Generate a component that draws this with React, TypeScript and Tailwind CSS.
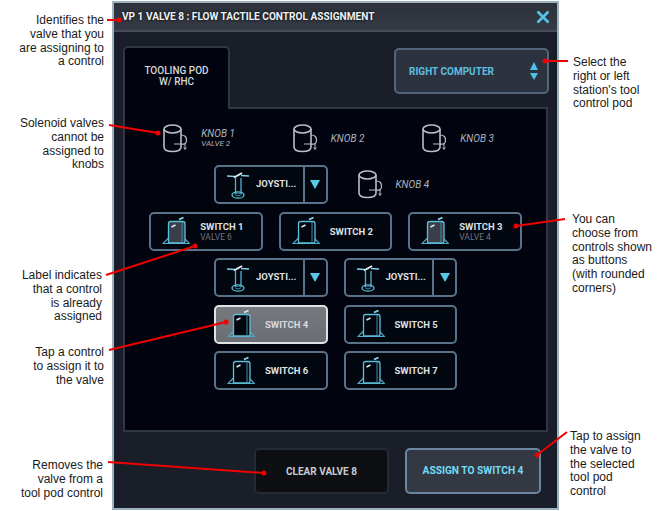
const MugIcon = () => (
  <svg width="26" height="29" viewBox="0 0 26 29" fill="none" stroke="#b9bec7" strokeWidth="1.6" className="shrink-0">
    <ellipse cx="10.5" cy="5" rx="8.5" ry="4" />
    <path d="M2 5 V23 Q2 27.5 10.5 27.5 Q19 27.5 19 23 V5" />
    <path d="M19 11 Q25 11 24.5 17 Q24 21 19 20 H12" strokeWidth="1.2" />
    <path d="M23 19 V25 M21.7 23.5 L23 25.5 L24.3 23.5" strokeWidth="1" />
  </svg>
);

const SwitchIcon = ({ dark, fill }: { dark?: boolean; fill?: string }) => (
  <svg width="28" height="30" viewBox="0 0 28 30" fill="none" className="shrink-0">
    <path d="M6.5 22 L1 27.5 H27.5 L23 23" stroke="#4fa9c6" strokeWidth="1.2" />
    <path d="M6.5 7.5 Q6.5 5.5 9 5.5 H21 Q23 5.5 23 8 V25.5 Q23 27 21 27 H6.5 Z" fill={fill ?? 'none'} stroke="#5cc0dc" strokeWidth="1.3" />
    <path d="M20 6 V27" stroke="#3d8ba6" strokeWidth="1" />
    <path d="M17 3.5 L21.5 1.5" stroke={dark ? '#d6e6ee' : '#8fdcf0'} strokeWidth="1.8" />
    <path d="M9.5 11 L13.5 9" stroke="#cdeaf4" strokeWidth="1.6" />
  </svg>
);

const JoystickIcon = () => (
  <svg width="24" height="29" viewBox="0 0 24 29" fill="none" className="shrink-0">
    <path d="M1 6 L9 6.5 M15 5.5 L23 6" stroke="#7fd4ec" strokeWidth="1.5" />
    <path d="M8 7.5 L16 3" stroke="#e4f2f7" strokeWidth="2" />
    <path d="M9.5 8 V24 M15 8 V24" stroke="#4fb2d0" strokeWidth="1.3" />
    <ellipse cx="12" cy="25" rx="6" ry="3.2" stroke="#5cc0dc" strokeWidth="1.3" />
    <ellipse cx="12" cy="24.5" rx="2.8" ry="1.4" stroke="#3d8ba6" strokeWidth="1" />
  </svg>
);

const Knob = ({ name, valve }: { name: string; valve?: string }) => (
  <div className="flex h-[39px] w-[113.5px] items-center pl-[13px]">
    <MugIcon />
    <div className="ml-[13px] flex flex-col italic text-[#aeb3bf]">
      <span className="text-[10px] leading-[11px]">{name}</span>
      {valve && <span className="text-[8px] leading-[9px]">{valve}</span>}
    </div>
  </div>
);

const SwitchButton = ({ name, valve, selected }: { name: string; valve?: string; selected?: boolean }) => (
  <div
    className={
      selected
        ? 'flex h-[39px] w-[113.5px] items-center rounded-[5px] border-2 border-[#dfe3e6] bg-gradient-to-b from-[#77797f] to-[#6a6d74] pl-[11px]'
        : 'flex h-[39px] w-[113.5px] items-center rounded-[5px] border-2 border-[#587389] bg-[#02060f] pl-[11px]'
    }
  >
    <SwitchIcon dark={selected} fill={selected ? '#03060d' : valve ? '#3a3e48' : undefined} />
    <div className="ml-[10px] flex flex-col">
      <span className={selected ? 'text-[9.5px] leading-[11px] font-bold text-[#d8dadd]' : 'text-[9.5px] leading-[11px] font-bold text-[#dfe1e4]'}>{name}</span>
      {valve && <span className="text-[8.5px] leading-[10px] text-[#6f7683]">{valve}</span>}
    </div>
  </div>
);

const JoystickButton = () => (
  <div className="flex h-[39px] w-[113.5px] items-stretch rounded-[5px] border-2 border-[#587389] bg-[#02060f]">
    <div className="flex flex-1 items-center border-r-2 border-[#587389] pl-[10px]">
      <JoystickIcon />
      <span className="ml-[6px] text-[9.5px] font-bold text-[#dfe1e4]">JOYSTI...</span>
    </div>
    <div className="flex w-[21px] items-center justify-center">
      <svg width="10" height="9" viewBox="0 0 10 9">
        <path d="M0 0 H10 L5 9 Z" fill="#58c9ea" />
      </svg>
    </div>
  </div>
);

const Row = ({ children }: { children: React.ReactNode }) => (
  <div className="flex justify-center gap-4">{children}</div>
);

// callout text sits beside the panel, at the spots the arrows point from
const Note = ({ className, lines }: { className: string; lines: string[] }) => (
  <div className={'absolute text-[12px] leading-[13.8px] text-[#1a1a1a] ' + className}>
    {lines.map((line) => (
      <div key={line} className="whitespace-nowrap">{line}</div>
    ))}
  </div>
);

const arrows = [
  [107, 20, 119, 20],
  [109, 125, 158, 133],
  [106, 275, 195, 246],
  [109, 350, 226, 322],
  [108, 462, 264, 473],
  [568, 61, 545, 61],
  [565, 219, 516, 226],
  [567, 432, 537, 455],
];

export default function App() {
  return (
    <div className="relative h-[511px] w-[672px] overflow-hidden bg-white pl-[112px] pt-px font-['Roboto',sans-serif]">
      <div className="flex h-[509px] w-[447px] flex-col border-2 border-[#9db1c0] bg-[#191e28]">
        <div className="flex h-[29px] shrink-0 items-center justify-between border-b-2 border-[#454c58] bg-gradient-to-b from-[#2c313a] to-[#353a44] pl-[8px] pr-[7px]">
          <span className="text-[10.1px] font-bold text-[#eef0f2] [text-shadow:0_0_3px_#000]">VP 1 VALVE 8 : FLOW TACTILE CONTROL ASSIGNMENT</span>
          <svg width="14" height="14" viewBox="0 0 14 14" fill="none" stroke="#56c3e6" strokeWidth="2.6">
            <path d="M1.5 1.5 L12.5 12.5 M12.5 1.5 L1.5 12.5" />
          </svg>
        </div>

        <div className="flex flex-1 flex-col pl-[9px] pr-[9px] pt-[14px]">
          <div className="flex h-[61px] items-start justify-between">
            <div className="relative z-10 flex h-[63px] w-[107px] flex-col items-center rounded-t-[5px] border-2 border-b-0 border-[#2f3744] bg-[#01040f] pt-[17px] text-[10px] leading-[11px] font-medium text-[#d5d8dc]">
              <span>TOOLING POD</span>
              <span>W/ RHC</span>
            </div>
            <div className="-mr-px mt-[2px] flex h-[46px] w-[155px] items-center justify-between rounded-[5px] border-2 border-[#52657a] bg-[#2d333e] pl-[13px] pr-[9px]">
              <span className="text-[10px] font-bold text-[#5cbfe0]">RIGHT COMPUTER</span>
              <svg width="8" height="18" viewBox="0 0 8 18" fill="#4fc0e8">
                <path d="M4 0 L8 8 H0 Z M0 11 H8 L4 18 Z" />
              </svg>
            </div>
          </div>

          <div className="flex h-[325px] flex-col gap-[7.5px] border-2 border-[#2f3744] bg-[#01040f] pt-[9.5px]">
            <Row>
              <Knob name="KNOB 1" valve="VALVE 2" />
              <Knob name="KNOB 2" />
              <Knob name="KNOB 3" />
            </Row>
            <Row>
              <JoystickButton />
              <Knob name="KNOB 4" />
            </Row>
            <Row>
              <SwitchButton name="SWITCH 1" valve="VALVE 6" />
              <SwitchButton name="SWITCH 2" />
              <SwitchButton name="SWITCH 3" valve="VALVE 4" />
            </Row>
            <Row>
              <JoystickButton />
              <JoystickButton />
            </Row>
            <Row>
              <SwitchButton name="SWITCH 4" selected />
              <SwitchButton name="SWITCH 5" />
            </Row>
            <Row>
              <SwitchButton name="SWITCH 6" />
              <SwitchButton name="SWITCH 7" />
            </Row>
          </div>

          <div className="mt-[16px] flex justify-end gap-4 pr-[7px]">
            <div className="flex h-[46px] w-[135px] items-center justify-center rounded-[5px] border-2 border-[#252b35] bg-[#0e0f12] text-[10px] font-bold text-[#c9ccd2]">
              CLEAR VALVE 8
            </div>
            <div className="flex h-[46px] w-[136px] items-center justify-center rounded-[5px] border-2 border-[#6a87a0] bg-[#333842] text-[10.2px] font-bold text-[#74dcf2]">
              ASSIGN TO SWITCH 4
            </div>
          </div>
        </div>
      </div>

      <div className="font-['Liberation_Sans',sans-serif]">
        <Note className="right-[568px] top-[14px] text-right" lines={['Identifies the', 'valve that you', 'are assigning to', 'a control']} />
        <Note className="right-[568px] top-[117px] text-right" lines={['Solenoid valves', 'cannot be', 'assigned to', 'knobs']} />
        <Note className="right-[570px] top-[269px] text-right" lines={['Label indicates', 'that a control', 'is already', 'assigned']} />
        <Note className="right-[568px] top-[346px] text-right" lines={['Tap a control', 'to assign it to', 'the valve']} />
        <Note className="right-[569px] top-[459px] text-right" lines={['Removes the', 'valve from a', 'tool pod control']} />
        <Note className="left-[573px] top-[56px]" lines={['Select the', 'right or left', "station's tool", 'control pod']} />
        <Note className="left-[572px] top-[213px]" lines={['You can', 'choose from', 'controls shown', 'as buttons', '(with rounded', 'corners)']} />
        <Note className="left-[570px] top-[430px]" lines={['Tap to assign', 'the valve to', 'the selected', 'tool pod', 'control']} />
      </div>

      <svg width="672" height="511" className="pointer-events-none absolute left-0 top-0">
        {arrows.map(([x1, y1, x2, y2]) => (
          <g key={x1 + '-' + y1}>
            <line x1={x1} y1={y1} x2={x2} y2={y2} stroke="#f00000" strokeWidth="2" />
            <circle cx={x2} cy={y2} r="2.5" fill="#f00000" />
          </g>
        ))}
      </svg>
    </div>
  );
}
